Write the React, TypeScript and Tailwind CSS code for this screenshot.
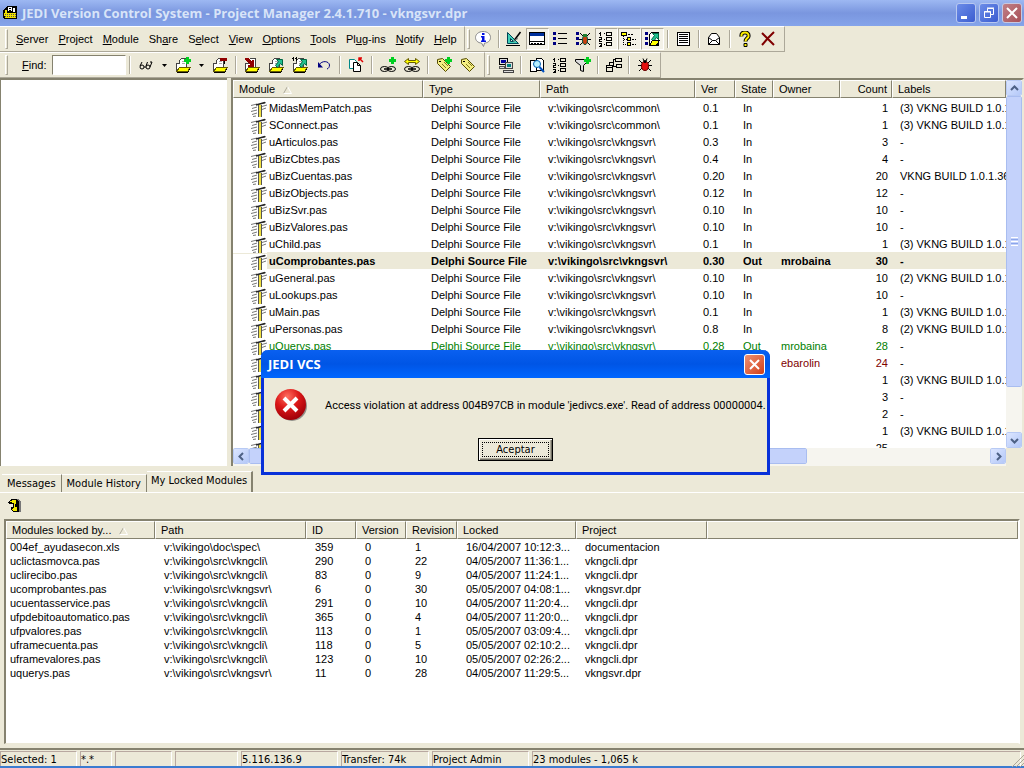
import React from 'react'

type IconProps = { children: React.ReactNode }

const Icon = ({ children }: IconProps) => (
    <svg className="size-4 shrink-0" viewBox="0 0 16 16" fill="none" stroke="#000" shapeRendering="crispEdges" aria-hidden="true">
        {children}
    </svg>
)

/* shared icon parts */

const Folder = () => (
    <>
        <path d="M1 15V6H5V2H12V10" fill="#fff" stroke="none" />
        <path d="M1.500 14V6.500H4.500V3.500L6.500 1.500H11.500V10" stroke="#444" />
        <path d="M7 4.500H10M7 6.500H10" stroke="#aaa" />
        <path d="M1.500 14.500L4.500 10.500H15.500L12.500 14.500Z" fill="#ffff00" stroke="#665c00" />
        <path d="M2 15.500H13M13 14.500H14M14 12.500H15" />
    </>
)

const GreenArrow = () => (
    <path d="M8.500 2.500H14.500V8.500L12.500 6.500L9.500 10.500L7.500 8.500L10.500 4.500Z" fill="#20c090" stroke="#064" shapeRendering="auto" />
)

const Plus = () => <path d="M11 0H14V2H16V5H14V7H11V5H9V2H11Z" fill="#00d020" stroke="none" />

const Chain = () => (
    <g shapeRendering="auto">
        <ellipse cx="4.500" cy="12" rx="4" ry="2.500" />
        <ellipse cx="11.500" cy="12" rx="4" ry="2.500" />
        <path d="M4 12H12" strokeWidth="1.500" />
    </g>
)

const Numbers = () => (
    <>
        <path d="M2.500 1V5M1 2.500H2M1 6.500H3.500V8.500H1.500V10H4M1 12.500H3.500V15.500H1M2 14.500H3" />
        <path d="M6 2.500H7M6 8.500H7M6 13.500H7" />
        <path d="M8.500 1.500H13.500V4.500H8.500ZM8.500 6.500H13.500V9.500H8.500ZM8.500 11.500H13.500V14.500H8.500Z" />
    </>
)

const Bullets = () => <path d="M1 1H4V4H1ZM1 6H4V9H1ZM1 11H4V14H1Z" fill="#000080" stroke="none" />

const Tag = () => (
    <>
        <path d="M1.500 2.500L6.500 1.500L14.500 9.500L9.500 14.500L1.500 6.500Z" fill="#f4ee80" stroke="#554c00" shapeRendering="auto" />
        <path d="M3 4.500H5" />
        <path d="M6 7L10 11M8 5L12 9" stroke="#807820" shapeRendering="auto" />
    </>
)

const icons = {
    info: (
        <g shapeRendering="auto">
            <path d="M8 .5C12.500 .5 15.500 3 15.500 6.500S12.500 12 9.500 12L8.500 15.500L6.500 12C3 12 .5 9.500 .5 6.500S3.500 .5 8 .5Z" fill="#fff" stroke="#888" />
            <path d="M7 2H9.500V4H7ZM6 5H9.500V9.500H11V11H6V9.500H7V6.500H6Z" fill="#0010e0" stroke="none" />
        </g>
    ),
    design: (
        <g shapeRendering="auto">
            <path d="M1.500 1.500V12.500H12.500Z" fill="#40d0b8" stroke="#045" />
            <path d="M4.500 7.500V10.500H7.500Z" fill="#ece9d8" stroke="#045" />
            <path d="M14.500 1L8.500 9" strokeWidth="1.500" />
            <path d="M12 7.500L8 9.500V11" stroke="#777" />
            <path d="M0 14.500H14" />
        </g>
    ),
    panel: (
        <>
            <path d="M.5 1.500H15.500V13.500H.5Z" fill="#fff" />
            <path d="M1 2H15V5H1Z" fill="#00309c" stroke="none" />
            <path d="M1 10.500H15" />
            <path d="M2 12.500H14" strokeDasharray="2 1" />
        </>
    ),
    bullets: (
        <>
            <Bullets />
            <path d="M6 2.500H15M6 7.500H15M6 12.500H15" />
        </>
    ),
    bulletBug: (
        <>
            <Bullets />
            <g shapeRendering="auto">
                <path d="M5 2L8 5M15 2L12 5M4 8.500H16M5 14L8 11M15 14L12 11" />
                <ellipse cx="10" cy="9" rx="2.500" ry="4.500" fill="#c84010" stroke="#054" />
                <path d="M8 3H12V6H8Z" fill="#208030" stroke="none" />
            </g>
        </>
    ),
    numbers: <Numbers />,
    tree: (
        <>
            <path d="M2.500 5V13.500H6M2.500 8.500H6" strokeDasharray="1 1" />
            <path d="M.5 1.500H5.500V4.500H.5Z" fill="#ffff00" />
            <path d="M6.500 6.500H9.500V9.500H6.500ZM6.500 11.500H9.500V14.500H6.500Z" fill="#ffff00" />
            <path d="M7 3.500H12M11 8.500H15M11 13.500H15" strokeDasharray="2 1" />
        </>
    ),
    bulletFolder: (
        <>
            <Bullets />
            <path d="M5.500 3.500L7.500 1.500H14.500V14.500H5.500Z" fill="#fff" />
            <GreenArrow />
            <path d="M5.500 14.500L8.500 9.500H15.500L12.500 14.500Z" fill="#ffff00" />
        </>
    ),
    lines: <path d="M2.500 1.500H14.500V14.500H2.500ZM4 3.500H13M4 5.500H13M4 7.500H13M4 9.500H13M4 11.500H13" fill="#fff" />,
    mail: (
        <g shapeRendering="auto">
            <path d="M2.500 6.500L5.500 2.500H10.500L13.500 6.500V13.500H2.500Z" fill="#fff" />
            <path d="M2.500 6.500L6.500 9.500H9.500L13.500 6.500M2.500 13.500L6.500 9.500M13.500 13.500L9.500 9.500" />
        </g>
    ),
    help: (
        <g shapeRendering="auto">
            <path d="M4.500 5.500C4 2 6 1.500 8 1.500S12 2.500 11.500 5.500C11 7.500 8.500 7.500 8.500 10.500" strokeWidth="4" />
            <path d="M4.500 5.500C4 2 6 1.500 8 1.500S12 2.500 11.500 5.500C11 7.500 8.500 7.500 8.500 10.500" stroke="#fff000" strokeWidth="2" />
            <path d="M7 12.500H10V15.500H7Z" fill="#fff000" />
        </g>
    ),
    close: <path d="M2 2L14 14M14 1L8 7L2 14" stroke="#800000" strokeWidth="2" shapeRendering="auto" />,
    glasses: (
        <g shapeRendering="auto">
            <circle cx="4" cy="10" r="2" />
            <circle cx="10" cy="10" r="2" />
            <path d="M2 9L4 5M12 10L14 5H12M6 10H8M8 9L9.500 5" />
        </g>
    ),
    folderAdd: (
        <>
            <Folder />
            <Plus />
        </>
    ),
    folderRemove: (
        <>
            <Folder />
            <path d="M8 1H15V4H8Z" fill="#900000" stroke="none" />
            <path d="M12.500 4V7" />
        </>
    ),
    checkIn: (
        <>
            <Folder />
            <path d="M1 1H4L8 5V3H10V10H4V8H6L1 3Z" fill="#900000" stroke="none" />
        </>
    ),
    checkOut: (
        <>
            <Folder />
            <GreenArrow />
        </>
    ),
    checkOutAll: (
        <>
            <Folder />
            <GreenArrow />
            <path d="M1.500 0V4M4.500 0V4M0 1.500H1M3 1.500H4" />
        </>
    ),
    undo: (
        <g shapeRendering="auto">
            <path d="M3 8C6 3 13 4 13.500 8C13.500 10 12.500 11.500 11 12" stroke="#000080" />
            <path d="M2 5V10.500H7Z" fill="#000080" stroke="none" />
        </g>
    ),
    copy: (
        <g shapeRendering="auto">
            <path d="M1.500 2.500H6.500L8.500 4.500V11.500H1.500Z" fill="#fff" stroke="#088" />
            <path d="M5.500 5.500H9.500L12.500 8.500V14.500H5.500ZM9.500 5.500V8.500H12.500" fill="#fff" />
            <path d="M15 5L11 1M10.500 1H14M11 .5V4" stroke="#e00000" strokeWidth="1.500" />
        </g>
    ),
    linkAdd: (
        <>
            <Chain />
            <Plus />
        </>
    ),
    linkShare: (
        <>
            <Chain />
            <path d="M.5 4.500L4.500 1.500V3.500H11.500V1.500L15.500 4.500L11.500 7.500V5.500H4.500V7.500Z" fill="#ffff00" stroke="#665c00" shapeRendering="auto" />
        </>
    ),
    tagAdd: (
        <>
            <Tag />
            <Plus />
        </>
    ),
    tag: <Tag />,
    network: (
        <>
            <path d="M1.500 1.500H9.500V7.500H1.500Z" fill="#ddd" />
            <path d="M3 3H8V6H3Z" fill="#0000a0" stroke="none" />
            <path d="M1.500 9.500H6.500V11.500H1.500Z" fill="#ddd" stroke="#555" />
            <path d="M7.500 5.500H14.500V11.500H7.500Z" fill="#ddd" stroke="#444" />
            <path d="M9 7H13V10H9Z" fill="#008080" stroke="none" />
            <path d="M5.500 13.500H15.500V15.500H5.500Z" fill="#ddd" stroke="#444" />
        </>
    ),
    search: (
        <>
            <path d="M1.500 3.500H7.500V14.500H1.500ZM7.500 1.500H12.500L14.500 3.500V13.500H7.500Z" fill="#fff" />
            <circle cx="8" cy="7" r="3.500" fill="#b8f0ff" stroke="#0060b0" shapeRendering="auto" />
            <path d="M10.500 10L15 15" stroke="#0050c0" strokeWidth="2" shapeRendering="auto" />
        </>
    ),
    filter: (
        <>
            <path d="M.5 2.500H12.500V4.500L8.500 8.500V14.500L5.500 13.500V8.500L.5 4.500Z" fill="#ddd" shapeRendering="auto" />
            <Plus />
        </>
    ),
    diagram: (
        <path d="M9.500 1.500H15.500V4.500H9.500ZM10.500 7.500H15.500V10.500H10.500ZM.5 8.500H6.500V14.500H.5ZM1 10.500H6M3.500 8V5.500H7.500V2.500H9M7.500 5.500V9.500H10" />
    ),
    bug: (
        <g shapeRendering="auto">
            <path d="M2 3L5 6M14 3L11 6M1 8.500H15M2 14L5 11M14 14L11 11M6 1.500L7 4M10 1.500L9 4" />
            <ellipse cx="8" cy="9" rx="3.500" ry="4.500" fill="#e81010" stroke="#600" />
            <circle cx="8" cy="4.500" r="1.500" fill="#000" stroke="none" />
        </g>
    )
}

type IconName = keyof typeof icons

const mainTools: (IconName | '|')[] = [
    'info', '|', 'design', 'panel', 'bullets', 'bulletBug', 'numbers', 'tree', 'bulletFolder', '|', 'lines', '|', 'mail', '|', 'help', 'close'
]
const pressed: string[] = ['panel', 'numbers', 'tree', 'bulletFolder']
const moduleTools: (IconName | '|')[] = [
    '|', 'checkIn', 'checkOut', 'checkOutAll', 'undo', '|', 'copy', '|', 'linkAdd', 'linkShare', '|', 'tagAdd', 'tag'
]
const viewTools: (IconName | '|')[] = ['network', '|', 'search', 'numbers', 'filter', '|', 'diagram', '|', 'bug']

// label and index of the underlined letter
const menus: [string, number][] = [
    ['Server', 0], ['Project', 0], ['Module', 0], ['Share', 2], ['Select', 1], ['View', 0],
    ['Options', 0], ['Tools', 0], ['Plug-ins', 2], ['Notify', 0], ['Help', 0]
]

const common = 'v:\\vikingo\\src\\common\\'
const svr = 'v:\\vikingo\\src\\vkngsvr\\'
const cli = 'v:\\vikingo\\src\\vkngcli\\'

type Module = { name: string; path?: string; ver?: string; state?: string; owner?: string; count: number; label: string; style?: string }

const modules: Module[] = [
    { name: 'MidasMemPatch.pas', path: common, ver: '0.1', count: 1, label: '(3) VKNG BUILD 1.0.1.36' },
    { name: 'SConnect.pas', path: common, ver: '0.1', count: 1, label: '(3) VKNG BUILD 1.0.1.36' },
    { name: 'uArticulos.pas', path: svr, ver: '0.3', count: 3, label: '-' },
    { name: 'uBizCbtes.pas', path: svr, ver: '0.4', count: 4, label: '-' },
    { name: 'uBizCuentas.pas', path: svr, ver: '0.20', count: 20, label: 'VKNG BUILD 1.0.1.36' },
    { name: 'uBizObjects.pas', path: svr, ver: '0.12', count: 12, label: '-' },
    { name: 'uBizSvr.pas', path: svr, ver: '0.10', count: 10, label: '-' },
    { name: 'uBizValores.pas', path: svr, ver: '0.10', count: 10, label: '-' },
    { name: 'uChild.pas', path: svr, ver: '0.1', count: 1, label: '(3) VKNG BUILD 1.0.1.36' },
    { name: 'uComprobantes.pas', path: svr, ver: '0.30', state: 'Out', owner: 'mrobaina', count: 30, label: '-', style: 'bg-[#ece9d8] font-bold' },
    { name: 'uGeneral.pas', path: svr, ver: '0.10', count: 10, label: '(2) VKNG BUILD 1.0.1.36' },
    { name: 'uLookups.pas', path: svr, ver: '0.10', count: 10, label: '-' },
    { name: 'uMain.pas', path: svr, ver: '0.1', count: 1, label: '(3) VKNG BUILD 1.0.1.36' },
    { name: 'uPersonas.pas', path: svr, ver: '0.8', count: 8, label: '(2) VKNG BUILD 1.0.1.36' },
    { name: 'uQuerys.pas', path: svr, ver: '0.28', state: 'Out', owner: 'mrobaina', count: 28, label: '-', style: 'text-[#008000]' },
    { name: '', owner: 'ebarolin', count: 24, label: '-', style: 'text-[#800000]' },
    { name: '', count: 1, label: '(3) VKNG BUILD 1.0.1.36' },
    { name: '', count: 3, label: '-' },
    { name: '', count: 2, label: '-' },
    { name: '', count: 1, label: '(3) VKNG BUILD 1.0.1.36' },
    { name: '', count: 25, label: '' }
]

const locked = [
    ['004ef_ayudasecon.xls', 'v:\\vikingo\\doc\\spec\\', '359', '0', '1', '16/04/2007 10:12:3...', 'documentacion'],
    ['uclictasmovca.pas', cli, '290', '0', '22', '04/05/2007 11:36:1...', 'vkngcli.dpr'],
    ['uclirecibo.pas', cli, '83', '0', '9', '04/05/2007 11:24:1...', 'vkngcli.dpr'],
    ['ucomprobantes.pas', svr, '6', '0', '30', '05/05/2007 04:08:1...', 'vkngsvr.dpr'],
    ['ucuentasservice.pas', cli, '291', '0', '10', '04/05/2007 11:20:4...', 'vkngcli.dpr'],
    ['ufpdebitoautomatico.pas', cli, '365', '0', '4', '04/05/2007 11:20:0...', 'vkngcli.dpr'],
    ['ufpvalores.pas', cli, '113', '0', '1', '05/05/2007 03:09:4...', 'vkngcli.dpr'],
    ['uframecuenta.pas', cli, '118', '0', '5', '05/05/2007 02:10:2...', 'vkngcli.dpr'],
    ['uframevalores.pas', cli, '123', '0', '10', '05/05/2007 02:26:2...', 'vkngcli.dpr'],
    ['uquerys.pas', svr, '11', '0', '28', '04/05/2007 11:29:5...', 'vkngsvr.dpr']
]

const status = [
    ['Selected: 1', 'w-[77px]'],
    ['*.*', 'w-[32px]'],
    ['', 'w-[57px]'],
    ['', 'w-[63px]'],
    ['5.116.136.9', 'w-[97px]'],
    ['Transfer: 74k', 'w-[88px]'],
    ['Project Admin', 'w-[97px]'],
    ['23 modules - 1,065 k', 'flex-1']
]

const Gripper = () => <span className="mx-px h-5 w-[3px] shrink-0 border border-t-white border-r-[#aca899] border-b-[#aca899] border-l-white" />

const Separator = () => (
    <span className="flex w-2 shrink-0 justify-center">
        <span className="h-[18px] w-[2px] border-r border-l border-r-white border-l-[#aca899]" />
    </span>
)

const Bar = ({ children }: { children: React.ReactNode }) => (
    <div className="flex h-[26px] items-center border-t border-r border-b border-t-white border-r-[#aca899] border-b-[#aca899]">{children}</div>
)

const ToolButton = ({ name, wide }: { name: IconName; wide?: boolean }) => (
    <button
        aria-label={name}
        className={`flex h-[22px] shrink-0 items-center justify-center ${wide ? 'w-6' : 'w-[23px]'} ${
            pressed.includes(name) && !wide ? 'border border-t-[#aca899] border-r-white border-b-white border-l-[#aca899] bg-[#f4f2e8]' : ''
        }`}
    >
        <Icon>{icons[name]}</Icon>
    </button>
)

const Tools = ({ items, wide }: { items: (IconName | '|')[]; wide?: boolean }) => (
    <>{items.map((item, i) => (item === '|' ? <Separator key={i} /> : <ToolButton key={i} name={item} wide={wide} />))}</>
)

const DropArrow = () => (
    <button aria-label="more" className="flex h-[22px] w-[13px] shrink-0 items-center justify-center">
        <svg width="5" height="3" viewBox="0 0 5 3" aria-hidden="true">
            <path d="M0 0H5L2.500 3Z" />
        </svg>
    </button>
)

const SortMark = () => (
    <svg className="ml-2 inline" width="9" height="8" viewBox="0 0 9 8" fill="none" aria-hidden="true">
        <path d="M4.500 .5L.5 7.500" stroke="#aca899" />
        <path d="M4.500 .5L8.500 7.500H.5" stroke="#fff" />
    </svg>
)

const Th = ({ children, right }: { children?: React.ReactNode; right?: boolean }) => (
    <th
        scope="col"
        className={`h-[18px] overflow-hidden border border-t-white border-r-[#85826f] border-b-[#85826f] border-l-white bg-[#ece9d8] font-normal whitespace-nowrap ${
            right ? 'pr-1 text-right' : 'pl-[5px] text-left'
        }`}
    >
        {children}
    </th>
)

const PasIcon = () => (
    <svg className="size-4 shrink-0" viewBox="0 0 16 16" fill="none" aria-hidden="true">
        <path d="M0 4.500L6 3M1 7.500L6 6M0 10.500L6 9M1 13.500L6 12M2 15.500L5 15M11 5.500L16 4M11 8.500L15 7M12 2.500L15 1.500" stroke="#777" />
        <path d="M5 4L14 1.500" stroke="#222" strokeWidth="1.500" />
        <path d="M7 4H11V16H7Z" fill="#555" />
        <path d="M8 4H10V16H8Z" fill="#f0e040" />
    </svg>
)

const chevrons = {
    up: 'M1 6L4.500 2.500L8 6',
    down: 'M1 3L4.500 6.500L8 3',
    left: 'M6 1L2.500 4.500L6 8',
    right: 'M3 1L6.500 4.500L3 8'
}

const ScrollButton = ({ dir }: { dir: keyof typeof chevrons }) => (
    <button
        aria-label={dir}
        className="flex size-4 shrink-0 items-center justify-center rounded-[2px] border border-white bg-linear-to-br from-[#dce6ff] to-[#b4c8f8] outline-1 -outline-offset-1 outline-[#b8caf4]"
    >
        <svg width="9" height="9" viewBox="0 0 9 9" fill="none" stroke="#4d6185" strokeWidth="2" aria-hidden="true">
            <path d={chevrons[dir]} />
        </svg>
    </button>
)

const TitleBar = () => (
    <header className="flex h-[26px] shrink-0 items-center bg-linear-to-b from-[#9db8f2] via-[#7a96df] to-[#85a4ea] pr-[2px] pl-[3px]">
        <svg className="size-4 shrink-0" viewBox="0 0 16 16" shapeRendering="crispEdges" aria-hidden="true">
            <path d="M0 6L4 1H14V14H1L0 12Z" fill="#000" />
            <path d="M5 2H9V6H5ZM10 3H12V7H10Z" fill="#fff" />
            <path d="M1 8H13V13H2Z" fill="#f0e000" />
            <path d="M2 9.500H13M2 11.500H13" stroke="#555" strokeDasharray="1 1" />
            <path d="M2 5H4V8H2Z" fill="#f0e000" />
            <path d="M6 3.500H8M6 5.500H8" stroke="#000" />
        </svg>
        <h1 className="ml-[3px] flex-1 font-[Open_Sans,sans-serif] text-[13px] leading-[20px] font-bold whitespace-nowrap text-[#d8e4f8]">
            JEDI Version Control System - Project Manager 2.4.1.710 - vkngsvr.dpr
        </h1>
        <div className="flex gap-[3px]">
            <button aria-label="Minimize" className="size-5 rounded-[3px] border border-[#b8c8f0] bg-linear-to-br from-[#6c8ce8] to-[#3c5cd0]">
                <svg viewBox="0 0 18 18" aria-hidden="true">
                    <path d="M4 12H10V15H4Z" fill="#fff" />
                </svg>
            </button>
            <button aria-label="Restore" className="size-5 rounded-[3px] border border-[#b8c8f0] bg-linear-to-br from-[#6c8ce8] to-[#3c5cd0]">
                <svg viewBox="0 0 18 18" fill="none" stroke="#fff" aria-hidden="true">
                    <path d="M7.500 7V4.500H13.500V10.500H11M4.500 7.500H10.500V13.500H4.500ZM7 4H14M4 8H11" />
                </svg>
            </button>
            <button aria-label="Close" className="size-5 rounded-[3px] border border-[#c8c8e0] bg-linear-to-br from-[#c08088] to-[#a85058]">
                <svg viewBox="0 0 18 18" stroke="#fff" strokeWidth="2" aria-hidden="true">
                    <path d="M4 4L14 14M14 4L4 14" />
                </svg>
            </button>
        </div>
    </header>
)

const ModuleList = () => (
    <section className="flex min-w-0 flex-1 flex-col border-t-2 border-r-2 border-l-2 border-t-[#85826f] border-r-[#ece9d8] border-l-[#85826f] bg-white">
        <div className="flex min-h-0 flex-1">
            <div className="min-w-0 flex-1 overflow-hidden">
                <table className="w-full table-fixed border-separate border-spacing-0">
                    <colgroup>
                        <col className="w-[190px]" />
                        <col className="w-[117px]" />
                        <col className="w-[155px]" />
                        <col className="w-[40px]" />
                        <col className="w-[38px]" />
                        <col className="w-[67px]" />
                        <col className="w-[52px]" />
                        <col />
                    </colgroup>
                    <thead>
                        <tr>
                            <Th>Module<SortMark /></Th>
                            <Th>Type</Th>
                            <Th>Path</Th>
                            <Th>Ver</Th>
                            <Th>State</Th>
                            <Th>Owner</Th>
                            <Th right>Count</Th>
                            <Th>Labels</Th>
                        </tr>
                    </thead>
                    <tbody className="before:block before:h-px">
                        {modules.map((m, i) => (
                            <tr key={i} className={`h-[17px] whitespace-nowrap [&>td]:pt-[2px] ${m.style ?? ''}`}>
                                <td>
                                    <span className="flex h-[15px] items-center gap-[2px]">
                                        <span className="bg-white pl-[18px]"><PasIcon /></span>
                                        {m.name}
                                    </span>
                                </td>
                                <td className="pl-2">{m.path && 'Delphi Source File'}</td>
                                <td className="pl-2">{m.path}</td>
                                <td className="pl-2">{m.ver}</td>
                                <td className="pl-2">{m.path && (m.state ?? 'In')}</td>
                                <td className="pl-2">{m.owner}</td>
                                <td className="pr-1 text-right">{m.count}</td>
                                <td className="overflow-hidden pl-2 text-black">{m.label}</td>
                            </tr>
                        ))}
                    </tbody>
                </table>
            </div>
            <div className="flex w-4 shrink-0 flex-col bg-[#f6f5ef]">
                <ScrollButton dir="up" />
                <div className="flex flex-[290] flex-col items-center justify-center gap-px rounded-[2px] border border-white bg-[#c4d2fb] outline-1 -outline-offset-1 outline-[#a9bdf0]">
                    <i className="h-px w-[7px] bg-white" />
                    <i className="h-px w-[7px] bg-[#8ca6ea]" />
                    <i className="h-px w-[7px] bg-white" />
                    <i className="h-px w-[7px] bg-[#8ca6ea]" />
                    <i className="h-px w-[7px] bg-white" />
                </div>
                <div className="flex-[45]" />
                <ScrollButton dir="down" />
            </div>
        </div>
        <div className="flex h-[18px] shrink-0">
            <div className="flex flex-1 bg-[#f6f5ef]">
                <ScrollButton dir="left" />
                <div className="h-4 flex-[556] rounded-[2px] border border-white bg-[#c4d2fb] outline-1 -outline-offset-1 outline-[#a9bdf0]" />
                <div className="flex-[183]" />
                <ScrollButton dir="right" />
            </div>
            <div className="w-4 bg-[#ece9d8]" />
        </div>
    </section>
)

const LockedList = () => (
    <div className="min-h-0 flex-1 overflow-hidden border-t-2 border-r-2 border-b border-l-2 border-t-[#85826f] border-r-white border-b-[#ece9d8] border-l-[#85826f] bg-white">
        <table className="w-full table-fixed border-separate border-spacing-0">
            <colgroup>
                <col className="w-[149px]" />
                <col className="w-[151px]" />
                <col className="w-[50px]" />
                <col className="w-[50px]" />
                <col className="w-[51px]" />
                <col className="w-[119px]" />
                <col className="w-[131px]" />
                <col />
            </colgroup>
            <thead>
                <tr>
                    <Th>Modules locked by...<SortMark /></Th>
                    <Th>Path</Th>
                    <Th>ID</Th>
                    <Th>Version</Th>
                    <Th>Revision</Th>
                    <Th>Locked</Th>
                    <Th>Project</Th>
                    <Th />
                </tr>
            </thead>
            <tbody className="before:block before:h-px">
                {locked.map((row, i) => (
                    <tr key={i} className="h-[14px] leading-[14px] whitespace-nowrap">
                        {row.map((cell, c) => (
                            <td key={c} className={c === 0 ? 'pl-1' : 'pl-[9px]'}>{cell}</td>
                        ))}
                    </tr>
                ))}
            </tbody>
        </table>
    </div>
)

const ErrorDialog = () => (
    <div
        role="alertdialog"
        aria-labelledby="dlg-title"
        className="absolute top-[350px] left-[261px] flex w-[509px] flex-col rounded-t-[7px] border-x-[3px] border-b-[3px] border-[#0831d9] bg-[#ece9d8] font-[Roboto,sans-serif]"
    >
        <div className="-mx-[3px] flex h-7 items-center justify-between rounded-t-[7px] bg-linear-to-b from-[#0a60f0] via-[#0055e5] to-[#0066ff] pr-[5px] pl-[7px]">
            <h2 id="dlg-title" className="font-[Open_Sans,sans-serif] text-[13px] font-bold text-white">JEDI VCS</h2>
            <button aria-label="Close dialog" className="size-[21px] rounded-[3px] border border-white bg-linear-to-br from-[#f09070] to-[#d03c10]">
                <svg viewBox="0 0 19 19" stroke="#fff" strokeWidth="2" aria-hidden="true">
                    <path d="M5 5L14 14M14 5L5 14" />
                </svg>
            </button>
        </div>
        <div className="flex items-center gap-[17px] pt-[10px] pl-[10px]">
            <svg className="size-[34px] shrink-0" viewBox="0 0 34 34" aria-hidden="true">
                <defs>
                    <radialGradient id="red" cx=".4" cy=".25" r=".75">
                        <stop offset="0" stopColor="#ff7060" />
                        <stop offset=".5" stopColor="#dc1818" />
                        <stop offset="1" stopColor="#a00008" />
                    </radialGradient>
                </defs>
                <circle cx="18" cy="18" r="15" fill="#555" opacity=".6" />
                <circle cx="16.500" cy="16.500" r="15.500" fill="url(#red)" />
                <path d="M10 10L23 23M23 10L10 23" stroke="#fff" strokeWidth="4" />
            </svg>
            <p className="whitespace-nowrap">Access violation at address 004B97CB in module 'jedivcs.exe'. Read of address 00000004.</p>
        </div>
        <button className="mt-4 mb-[11px] h-[23px] w-[75px] self-center border border-black p-px font-[DejaVu_Sans_Condensed,sans-serif] shadow-[inset_1px_1px_#fff,inset_-1px_-1px_#716f64,inset_-2px_-2px_#aca899]">
            <span className="m-[2px] flex h-[15px] items-center justify-center border border-dotted border-black">Aceptar</span>
        </button>
    </div>
)

export default function App() {
    return (
        <div className="relative flex h-screen flex-col overflow-hidden bg-[#ece9d8] font-[Liberation_Sans,Arial,sans-serif] text-[11px] leading-[13px] text-black">
            <TitleBar />
            <div className="flex shrink-0">
                <Bar>
                    <div className="ml-1 flex"><Gripper /></div>
                    <nav className="ml-[7px] flex gap-[10px] pr-[7px]">
                        {menus.map(([label, at]) => (
                            <button key={label}>
                                {label.slice(0, at)}
                                <u>{label[at]}</u>
                                {label.slice(at + 1)}
                            </button>
                        ))}
                    </nav>
                </Bar>
                <Bar>
                    <div className="mr-px ml-px flex"><Gripper /></div>
                    <Tools items={mainTools} />
                    <span className="w-1" />
                </Bar>
            </div>
            <div className="flex shrink-0">
                <Bar>
                    <div className="ml-1 flex"><Gripper /></div>
                    <label htmlFor="find" className="ml-[13px] w-[30px]"><u>F</u>ind:</label>
                    <input
                        id="find"
                        className="h-5 w-[74px] border border-t-[#85826f] border-r-white border-b-white border-l-[#85826f] bg-white px-1 outline-none"
                    />
                    <Separator />
                    <ToolButton name="glasses" wide />
                    <DropArrow />
                    <ToolButton name="folderAdd" wide />
                    <DropArrow />
                    <ToolButton name="folderRemove" wide />
                    <Tools items={moduleTools} wide />
                    <span className="w-1" />
                </Bar>
                <Bar>
                    <div className="mr-[3px] ml-px flex"><Gripper /></div>
                    <div className="flex items-center [&_button]:border-0 [&_button]:bg-transparent">
                        <Tools items={viewTools} />
                    </div>
                    <span className="w-1" />
                </Bar>
            </div>
            <main className="flex min-h-0 flex-[388] gap-1">
                <aside className="w-[227px] shrink-0 border-t-2 border-l border-t-[#85826f] border-l-[#85826f] bg-white" />
                <ModuleList />
            </main>
            <section className="flex min-h-0 flex-[277] flex-col pt-[5px]">
                <div className="flex items-end pl-[2px] font-[DejaVu_Sans_Condensed,sans-serif]">
                    {['Messages', 'Module History'].map((tab) => (
                        <button key={tab} className="h-[18px] border-t border-r border-t-white border-r-[#85826f] px-[5px] whitespace-nowrap">{tab}</button>
                    ))}
                    <button className="h-[21px] border-t border-r-2 border-t-white border-r-[#85826f] px-1 pb-1 whitespace-nowrap">My Locked Modules</button>
                </div>
                <div className="flex min-h-0 flex-1 flex-col border-t border-t-white px-1 pb-1">
                    <button aria-label="Refresh" className="ml-1 flex h-[26px] w-4 items-center">
                        <svg className="size-4" viewBox="0 0 16 16" shapeRendering="crispEdges" aria-hidden="true">
                            <path d="M5 1H10L13 4V14H5Z" fill="#777" />
                            <path d="M0 4L4 1H9L11 4V14H5L3 12V9H5V6H1Z" fill="#000" />
                            <path d="M1 4L5 2H8V6H7V9H9V13H5L4 11L6 9V5Z" fill="#f0e800" />
                        </svg>
                    </button>
                    <LockedList />
                </div>
            </section>
            <footer className="flex h-5 shrink-0 gap-[3px] border-t-2 border-b-2 border-t-[#85826f] border-b-[#3c7cd0] pt-px font-[DejaVu_Sans_Condensed,sans-serif]">
                {status.map(([text, width], i) => (
                    <span key={i} className={`overflow-hidden border-t border-r border-l border-t-[#b8a8a0] border-r-white border-l-[#b8a8a0] pt-px whitespace-nowrap ${width} ${i < 7 ? 'shrink-0' : ''}`}>
                        {text}
                    </span>
                ))}
                <svg className="-ml-4 size-4 shrink-0" viewBox="0 0 16 16" stroke="#aca899" aria-hidden="true">
                    <path d="M4 16L16 4M8 16L16 8M12 16L16 12" />
                </svg>
            </footer>
            <ErrorDialog />
        </div>
    )
}
